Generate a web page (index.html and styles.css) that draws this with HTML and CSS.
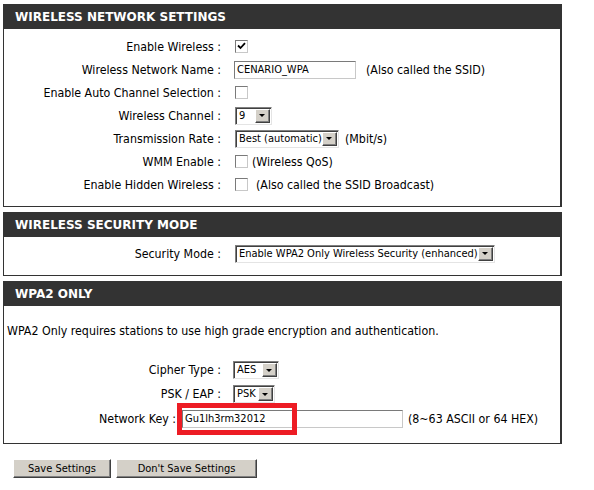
FILE: index.html
```html
<!DOCTYPE html>
<html>
<head>
<meta charset="utf-8">
<title>Wireless Settings</title>
<link rel="stylesheet" href="styles.css">
</head>
<body>
<section class="box">
  <h2 class="box-head">WIRELESS NETWORK SETTINGS</h2>
  <div class="box-body body-net">
    <div class="row"><span class="lbl">Enable Wireless :</span><span class="ctl"><span class="chk"><svg width="9" height="9" viewBox="0 0 9 9"><path d="M1 3.5 L3.5 6 L8 1.2" fill="none" stroke="#000" stroke-width="1.8"/></svg></span></span></div>
    <div class="row"><span class="lbl">Wireless Network Name :</span><span class="ctl"><span class="txt w-ssid">CENARIO_WPA</span><span class="hint h-ssid">(Also called the SSID)</span></span></div>
    <div class="row"><span class="lbl">Enable Auto Channel Selection :</span><span class="ctl"><span class="chk"></span></span></div>
    <div class="row"><span class="lbl">Wireless Channel :</span><span class="ctl"><span class="sel w-ch"><span class="sel-val">9</span><span class="sel-btn"></span></span></span></div>
    <div class="row"><span class="lbl">Transmission Rate :</span><span class="ctl"><span class="sel w-rate"><span class="sel-val">Best (automatic)</span><span class="sel-btn"></span></span><span class="hint h-rate">(Mbit/s)</span></span></div>
    <div class="row"><span class="lbl">WMM Enable :</span><span class="ctl"><span class="chk"></span><span class="hint h-qos">(Wireless QoS)</span></span></div>
    <div class="row"><span class="lbl">Enable Hidden Wireless :</span><span class="ctl"><span class="chk"></span><span class="hint h-hid">(Also called the SSID Broadcast)</span></span></div>
  </div>
</section>
<section class="box">
  <h2 class="box-head">WIRELESS SECURITY MODE</h2>
  <div class="box-body body-sec">
    <div class="row"><span class="lbl">Security Mode :</span><span class="ctl"><span class="sel w-mode"><span class="sel-val">Enable WPA2 Only Wireless Security (enhanced)</span><span class="sel-btn"></span></span></span></div>
  </div>
</section>
<section class="box">
  <h2 class="box-head">WPA2 ONLY</h2>
  <div class="box-body body-wpa">
    <p class="desc">WPA2 Only requires stations to use high grade encryption and authentication.</p>
    <div class="row row-tall"><span class="lbl">Cipher Type :</span><span class="ctl ctl-tight"><span class="sel w-aes"><span class="sel-val">AES</span><span class="sel-btn"></span></span></span></div>
    <div class="row row-tall"><span class="lbl">PSK / EAP :</span><span class="ctl ctl-tight"><span class="sel w-psk"><span class="sel-val">PSK</span><span class="sel-btn"></span></span></span></div>
    <div class="row row-key"><span class="lbl lbl-key">Network Key :</span><span class="ctl ctl-key"><span class="key-wrap"><span class="txt w-key">Gu1lh3rm32012</span><span class="mark"></span></span><span class="hint h-key">(8~63 ASCII or 64 HEX)</span></span></div>
  </div>
</section>
<div class="actions">
  <span class="btn w-save">Save Settings</span>
  <span class="btn w-nosave">Don't Save Settings</span>
</div>
</body>
</html>
```

FILE: styles.css
```css
html, body {
  margin: 0;
  background: #fff;
}
body {
  padding: 4px 0 0 3px;
  font-family: "DejaVu Sans Condensed", "DejaVu Sans", sans-serif;
  font-size: 12.3px;
  color: #000;
}
.box {
  width: 559px;
  box-sizing: border-box;
  border: 1px solid #333;
  border-top: 0;
  border-right-width: 2px;
  margin-bottom: 5px;
}
.box-head {
  margin: 0 -2px 0 -1px;
  height: 25px;
  line-height: 26px;
  background: #333;
  color: #fff;
  font-family: "DejaVu Sans", sans-serif;
  font-weight: bold;
  font-size: 12px;
  padding-left: 12px;
}
.body-net { padding: 6px 0 10px; }
.body-sec { padding: 5px 0 10px; }
.body-wpa { padding: 14px 0 11px; }
.row {
  display: flex;
  align-items: center;
  height: 23px;
}
.row-tall { height: 24px; }
.row-key { height: 26px; }
.lbl {
  flex: none;
  width: 217px;
  text-align: right;
  white-space: nowrap;
}
.lbl-key { width: 172px; }
.ctl {
  display: flex;
  align-items: center;
  margin-left: 13px;
  white-space: nowrap;
}
.ctl-tight { margin-left: 12px; }
.ctl-key { margin-left: 6px; }
.desc {
  margin: 0 0 15px;
  padding-left: 3px;
  height: 23px;
  line-height: 23px;
}
.chk {
  box-sizing: border-box;
  width: 13px;
  height: 13px;
  margin-left: 1px;
  background: #fff;
  border: 1px solid;
  border-color: #7a7a7a #c8c8c8 #c8c8c8 #7a7a7a;
  display: flex;
  align-items: center;
  justify-content: center;
}
.chk svg { display: block; }
.txt {
  box-sizing: border-box;
  height: 18px;
  line-height: 15px;
  padding-left: 2px;
  border: 1px solid;
  border-color: #7a7a7a #c8c8c8 #c8c8c8 #7a7a7a;
  background: #fff;
  overflow: hidden;
  font-size: 11px;
}
.w-ssid { width: 122px; }
.w-key { width: 221px; display: block; }
.key-wrap { position: relative; display: block; }
.mark {
  position: absolute;
  left: -5px;
  top: -7px;
  width: 120px;
  height: 32px;
  box-sizing: border-box;
  border: 5px solid #ed1c24;
}
.sel {
  box-sizing: border-box;
  height: 18px;
  display: flex;
  align-items: stretch;
  border: 1px solid;
  border-color: #808080 #e4e4e4 #e4e4e4 #808080;
  box-shadow: inset 1px 1px 0 #404040;
  background: #fff;
  padding: 1px;
  font-size: 11px;
}
.sel-val {
  flex: 1;
  padding-left: 2px;
  line-height: 14px;
  overflow: hidden;
  white-space: nowrap;
}
.sel-btn {
  flex: none;
  width: 15px;
  box-sizing: border-box;
  background: #d4d0c8;
  border: 1px solid;
  border-color: #fff #404040 #404040 #fff;
  box-shadow: inset -1px -1px 0 #808080;
  display: flex;
  align-items: center;
  justify-content: center;
}
.sel-btn::after {
  content: "";
  width: 0;
  height: 0;
  border-left: 3px solid transparent;
  border-right: 3px solid transparent;
  border-top: 3px solid #000;
  margin-right: 1px;
}
.w-ch { width: 37px; margin-left: 1px; }
.w-rate { width: 104px; margin-left: 1px; }
.w-mode { width: 260px; margin-left: 1px; }
.w-aes { width: 46px; }
.w-psk { width: 42px; }
.hint { white-space: nowrap; }
.h-ssid { margin-left: 10px; }
.h-rate { margin-left: 6px; }
.h-qos { margin-left: 4px; }
.h-hid { margin-left: 8px; }
.h-key { margin-left: 5px; }
.actions {
  margin-top: 15px;
  padding-left: 10px;
  display: flex;
  gap: 5px;
}
.btn {
  box-sizing: border-box;
  height: 19px;
  line-height: 17px;
  text-align: center;
  background: #d4d0c8;
  border: 1px solid;
  border-color: #fff #404040 #404040 #fff;
  box-shadow: inset -1px -1px 0 #808080;
  font-size: 11px;
}
.w-save { width: 98px; }
.w-nosave { width: 141px; }
```
